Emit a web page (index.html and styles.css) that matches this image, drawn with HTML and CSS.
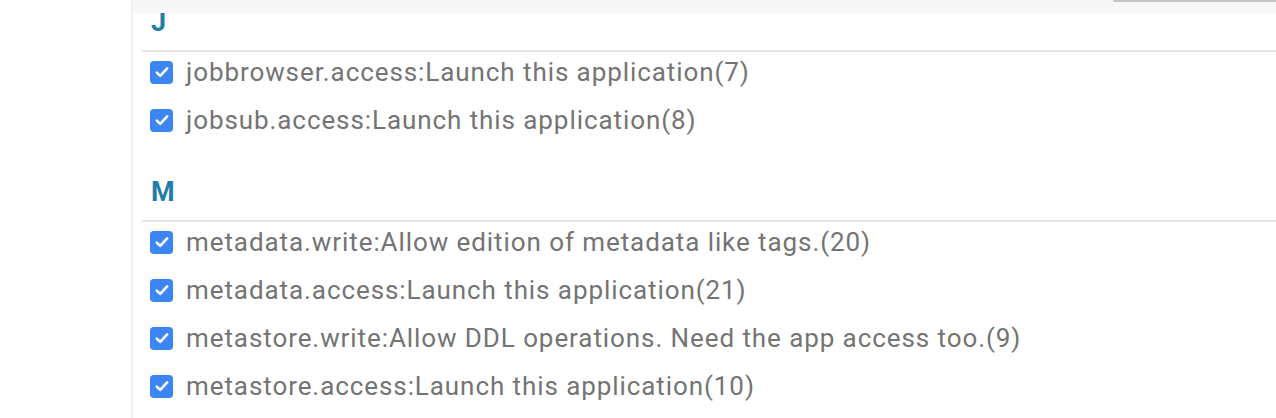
FILE: index.html
```html
<!DOCTYPE html>
<html>
<head>
<meta charset="utf-8">
<link rel="stylesheet" href="styles.css">
</head>
<body>
<div class="page">
  <aside class="sidebar"></aside>
  <main class="content">
    <div class="toolbar"><div class="toolbar-btn"></div></div>
    <section class="group">
      <h3 class="group-title">J</h3>
      <ul class="perm-list">
        <li class="perm"><span class="check"><svg viewBox="0 0 22 22" width="22" height="22"><path d="M5.8 11.6l3.4 3.3L16.2 7.4" fill="none" stroke="#fff" stroke-width="2.6" stroke-linecap="round" stroke-linejoin="round"/></svg></span>jobbrowser.access:Launch this application(7)</li>
        <li class="perm"><span class="check"><svg viewBox="0 0 22 22" width="22" height="22"><path d="M5.8 11.6l3.4 3.3L16.2 7.4" fill="none" stroke="#fff" stroke-width="2.6" stroke-linecap="round" stroke-linejoin="round"/></svg></span>jobsub.access:Launch this application(8)</li>
      </ul>
    </section>
    <section class="group">
      <h3 class="group-title">M</h3>
      <ul class="perm-list">
        <li class="perm"><span class="check"><svg viewBox="0 0 22 22" width="22" height="22"><path d="M5.8 11.6l3.4 3.3L16.2 7.4" fill="none" stroke="#fff" stroke-width="2.6" stroke-linecap="round" stroke-linejoin="round"/></svg></span>metadata.write:Allow edition of metadata like tags.(20)</li>
        <li class="perm"><span class="check"><svg viewBox="0 0 22 22" width="22" height="22"><path d="M5.8 11.6l3.4 3.3L16.2 7.4" fill="none" stroke="#fff" stroke-width="2.6" stroke-linecap="round" stroke-linejoin="round"/></svg></span>metadata.access:Launch this application(21)</li>
        <li class="perm"><span class="check"><svg viewBox="0 0 22 22" width="22" height="22"><path d="M5.8 11.6l3.4 3.3L16.2 7.4" fill="none" stroke="#fff" stroke-width="2.6" stroke-linecap="round" stroke-linejoin="round"/></svg></span>metastore.write:Allow DDL operations. Need the app access too.(9)</li>
        <li class="perm"><span class="check"><svg viewBox="0 0 22 22" width="22" height="22"><path d="M5.8 11.6l3.4 3.3L16.2 7.4" fill="none" stroke="#fff" stroke-width="2.6" stroke-linecap="round" stroke-linejoin="round"/></svg></span>metastore.access:Launch this application(10)</li>
      </ul>
    </section>
  </main>
</div>
</body>
</html>
```
FILE: styles.css
```css
* { box-sizing: border-box; }
html, body { margin: 0; padding: 0; background: #fff; }
body {
  font-family: Roboto, "Liberation Sans", sans-serif;
  width: 1276px;
  height: 418px;
  overflow: hidden;
}
.page {
  display: flex;
  height: 418px;
}
.sidebar {
  width: 133px;
  flex: none;
  background: #fff;
  border-right: 2px solid #f0f0f0;
}
.content {
  flex: 1;
  position: relative;
  padding-left: 9px;
}
.toolbar {
  position: absolute;
  top: 0;
  left: 0;
  right: 0;
  height: 13px;
  background: #f7f7f7;
  z-index: 2;
}
.toolbar-btn {
  position: absolute;
  top: 0;
  right: 0;
  width: 163px;
  height: 2px;
  background: #c4c4c4;
  border-bottom-left-radius: 6px;
}
.group-title {
  margin: 0;
  height: 52px;
  padding: 2px 0 0 9px;
  line-height: 40px;
  font-size: 27px;
  font-weight: 700;
  color: #1f7ea6;
  border-bottom: 2px solid #e6e6e6;
}
.group + .group { margin-top: 30px; }
.perm-list {
  list-style: none;
  margin: 0;
  padding: 0 0 0 8px;
  display: flex;
  flex-direction: column;
  gap: 8px;
}
.perm {
  height: 40px;
  display: flex;
  align-items: center;
  font-size: 26px;
  letter-spacing: 0.92px;
  color: #747474;
}
.check {
  width: 23px;
  height: 23px;
  flex: none;
  border-radius: 4px;
  background: #3b86f2;
  margin-right: 13px;
  display: flex;
  align-items: center;
  justify-content: center;
}
.check svg { display: block; }
```
